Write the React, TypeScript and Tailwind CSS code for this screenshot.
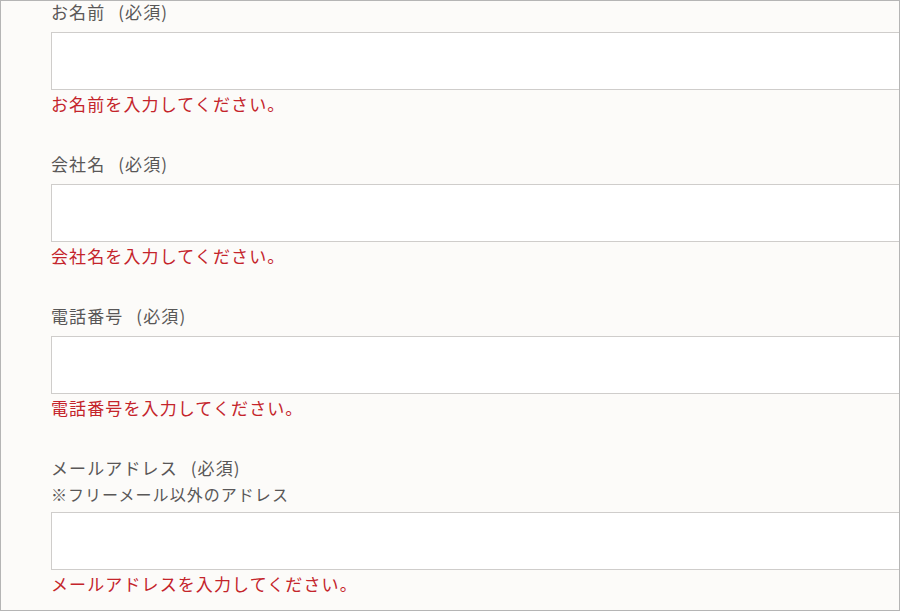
import React from "react";

const font = { fontFamily: '"Noto Sans CJK JP", "Noto Sans", sans-serif' };

function Field({ label, note, error }: { label: string; note?: string; error: string }) {
  return (
    <div className="flex flex-col">
      <div className="h-[28px] text-[17px] leading-[28px] tracking-[0.065em] whitespace-nowrap text-[#595757]">
        {label} <span className="ml-[8px]">(必須)</span>
      </div>
      {note && (
        <div className="h-[24px] text-[16px] leading-[24px] tracking-[0.065em] whitespace-nowrap text-[#595757]">{note}</div>
      )}
      <div className="mt-[6px] h-[58px] w-[900px] border border-[#cfcdcb] bg-white" />
      <div className="h-[28px] text-[17px] leading-[28px] tracking-[0.065em] whitespace-nowrap text-[#c4242b]">{error}</div>
    </div>
  );
}

export default function App() {
  return (
    <div
      className="h-[611px] w-[900px] overflow-hidden border border-[#b5b5b5] bg-[#fcfbf9]"
      style={font}
    >
      <div className="mt-[-3px] flex flex-col gap-[32px] pl-[50px]">
        <Field label="お名前" error="お名前を入力してください。" />
        <Field label="会社名" error="会社名を入力してください。" />
        <Field label="電話番号" error="電話番号を入力してください。" />
        <Field label="メールアドレス" note="※フリーメール以外のアドレス" error="メールアドレスを入力してください。" />
      </div>
    </div>
  );
}
